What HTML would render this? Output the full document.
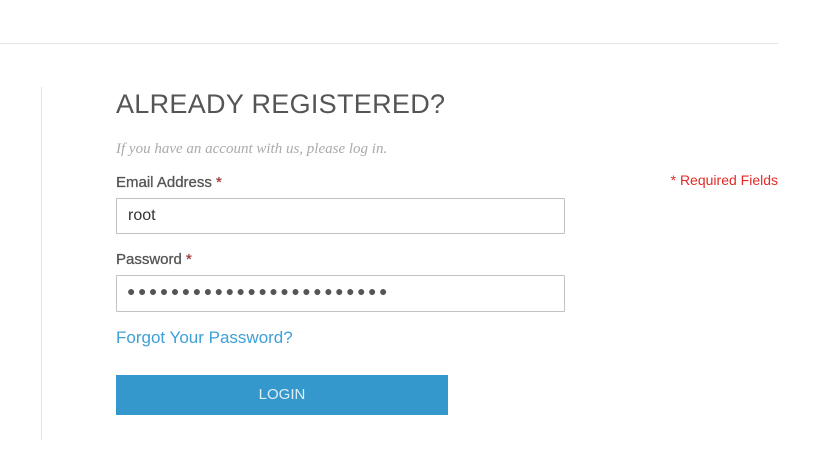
<!DOCTYPE html>
<html><head><style>
body{margin:0;width:838px;height:456px;background:#fff;position:relative;font-family:"Liberation Sans",sans-serif;overflow:hidden}
.a{position:absolute;white-space:nowrap}
</style></head><body>
<div class="a" style="left:0;top:43px;width:778px;height:1px;background:#e6e6e6"></div>
<div class="a" style="left:41px;top:87px;width:1px;height:353px;background:#e3e3e3"></div>
<div class="a" style="left:116px;top:89px;font-size:27px;color:#555;letter-spacing:0.3px">ALREADY REGISTERED?</div>
<div class="a" style="left:116px;top:141px;font-family:'Liberation Serif',serif;font-style:italic;font-size:15px;color:#aaa">If you have an account with us, please log in.</div>
<div class="a" style="left:116px;top:174px;font-size:15px;color:#555;-webkit-text-stroke:0.3px #555">Email Address <span style="color:#e02b27">*</span></div>
<div class="a" style="right:60px;top:172px;font-size:14px;color:#e02b27">* Required Fields</div>
<div class="a" style="left:116px;top:198px;width:447px;height:34px;border:1px solid #c2c2c2;border-radius:1px"></div>
<div class="a" style="left:128px;top:207px;font-size:16px;color:#333">root</div>
<div class="a" style="left:116px;top:251px;font-size:15px;color:#555;-webkit-text-stroke:0.3px #555">Password <span style="color:#e02b27">*</span></div>
<div class="a" style="left:116px;top:275px;width:447px;height:35px;border:1px solid #c2c2c2;border-radius:1px"></div>
<div class="a" style="left:127px;top:283px;font-size:14px;color:#555;letter-spacing:2.5px">●●●●●●●●●●●●●●●●●●●●●●●●</div>
<div class="a" style="left:116px;top:328px;font-size:17px;color:#3ea0d6">Forgot Your Password?</div>
<div class="a" style="left:116px;top:375px;width:332px;height:40px;background:#3498cc;color:#dfeef7;font-size:15px;text-align:center;line-height:40px">LOGIN</div>
</body></html>
